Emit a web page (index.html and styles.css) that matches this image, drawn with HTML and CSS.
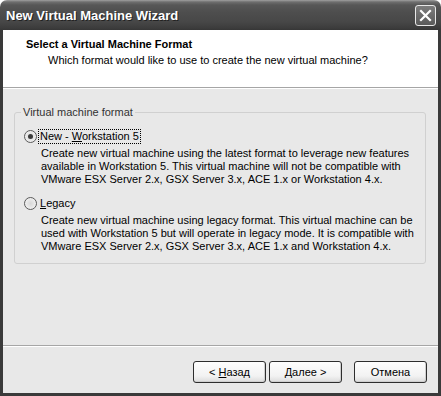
FILE: index.html
```html
<!DOCTYPE html>
<html lang="en">
<head>
    <meta charset="UTF-8">
    <title>New Virtual Machine Wizard</title>
    <link rel="stylesheet" href="styles.css">
</head>
<body>
    <div class="window">
        <div class="titlebar">
            <span class="title">New Virtual Machine Wizard</span>
            <span class="close">
                <svg width="13" height="13" viewBox="0 0 13 13">
                    <path d="M2 2 L11 11 M11 2 L2 11" stroke="#fff" stroke-width="2.2" stroke-linecap="square"/>
                </svg>
            </span>
        </div>
        <div class="frame">
            <div class="header">
                <div class="head-title">Select a Virtual Machine Format</div>
                <div class="head-sub">Which format would like to use to create the new virtual machine?</div>
            </div>
            <div class="content">
                <fieldset class="group">
                    <legend>Virtual machine format</legend>
                    <div class="option">
                        <div class="radio-row">
                            <span class="radio checked"></span>
                            <span class="label focus">New - <u>W</u>orkstation 5</span>
                        </div>
                        <p class="desc">Create new virtual machine using the latest format to leverage new features available in Workstation 5. This virtual machine will not be compatible with VMware ESX Server 2.x, GSX Server 3.x, ACE 1.x or Workstation 4.x.</p>
                    </div>
                    <div class="option">
                        <div class="radio-row">
                            <span class="radio"></span>
                            <span class="label"><u>L</u>egacy</span>
                        </div>
                        <p class="desc">Create new virtual machine using legacy format. This virtual machine can be used with Workstation 5 but will operate in legacy mode. It is compatible with VMware ESX Server 2.x, GSX Server 3.x, ACE 1.x and Workstation 4.x.</p>
                    </div>
                </fieldset>
            </div>
            <div class="buttons">
                <span class="btn"><span>&lt; <u>Н</u>азад</span></span>
                <span class="btn next"><span><u>Д</u>алее &gt;</span></span>
                <span class="btn cancel"><span>Отмена</span></span>
            </div>
        </div>
    </div>
</body>
</html>
```

FILE: styles.css
```css
*{
    margin: 0;
    padding: 0;
    box-sizing: border-box;
}
body{
    background: #fff;
    font-family: "Liberation Sans", Arial, sans-serif;
    font-size: 11px;
    color: #000;
}
.window{
    width: 441px;
    height: 396px;
    display: flex;
    flex-direction: column;
}
.titlebar{
    height: 30px;
    border-radius: 7px 7px 0 0;
    background: linear-gradient(#a0a0a0 0, #6e6e6e 2px, #575757 5px, #4e4e4e 12px, #474747 22px, #3c3c3c 28px, #363636 30px);
    display: flex;
    align-items: center;
    justify-content: space-between;
    padding: 0 5px 0 6px;
}
.title{
    color: #fff;
    font-family: "Liberation Sans", Arial, sans-serif;
    font-weight: bold;
    font-size: 13px;
    text-shadow: 1px 1px 0 #222;
    margin-top: 1px;
}
.close{
    width: 21px;
    height: 21px;
    border: 1px solid #e8e8e8;
    border-radius: 3px;
    background: linear-gradient(#7c7c7c, #5a5a5a);
    display: flex;
    align-items: center;
    justify-content: center;
    margin-top: 1px;
}
.frame{
    flex: 1;
    display: flex;
    flex-direction: column;
    background: #e8e8e8;
    border: 3px solid #3a3a3a;
    border-top: none;
}
.header{
    background: #fff;
    height: 58px;
    border-bottom: 1px solid #a6a6a6;
    box-shadow: 0 1px 0 #fff;
    padding: 8px 0 0 23px;
}
.head-title{
    font-weight: bold;
    font-size: 11px;
    line-height: 13px;
}
.head-sub{
    padding-left: 22px;
    margin-top: 3px;
    line-height: 13px;
}
.content{
    flex: 1;
    padding: 18px 12px 0 11px;
    border-bottom: 1px solid #a6a6a6;
    box-shadow: 0 1px 0 #fff;
}
.group{
    border: 1px solid #d0d0d0;
    border-radius: 3px;
    padding: 10px 0 10px 9px;
}
.group legend{
    color: #333;
    padding: 0 2px;
    margin-left: -3px;
    line-height: 13px;
}
.option{
    margin-bottom: 10px;
}
.option:last-child{
    margin-bottom: 0;
}
.radio-row{
    display: flex;
    align-items: center;
    height: 15px;
}
.radio{
    width: 13px;
    height: 13px;
    border-radius: 50%;
    border: 1px solid #5a5a5a;
    background: radial-gradient(#d8d8d8, #f8f8f8);
    display: flex;
    align-items: center;
    justify-content: center;
    margin-right: 1px;
}
.radio.checked::after{
    content: "";
    width: 5px;
    height: 5px;
    border-radius: 50%;
    background: #3a3a3a;
}
.label{
    padding: 0 1px;
    line-height: 13px;
    border: 1px dotted transparent;
}
.label.focus{
    border-color: #000;
}
.desc{
    padding-left: 17px;
    line-height: 13px;
    margin-top: 3px;
    width: 400px;
}
.buttons{
    height: 47px;
    display: flex;
    justify-content: flex-end;
    align-items: flex-start;
    padding: 15px 11px 0 0;
}
.btn{
    width: 73px;
    height: 22px;
    border: 1px solid #2e2e2e;
    border-radius: 3px;
    background: linear-gradient(#fefefe, #f2f2f2 70%, #dcdcdc);
    display: flex;
    align-items: center;
    justify-content: center;
    box-shadow: inset -1px -1px 0 #cfcfcf;
}
.btn.next{
    margin-left: 3px;
}
.btn.cancel{
    margin-left: 12px;
}
```
